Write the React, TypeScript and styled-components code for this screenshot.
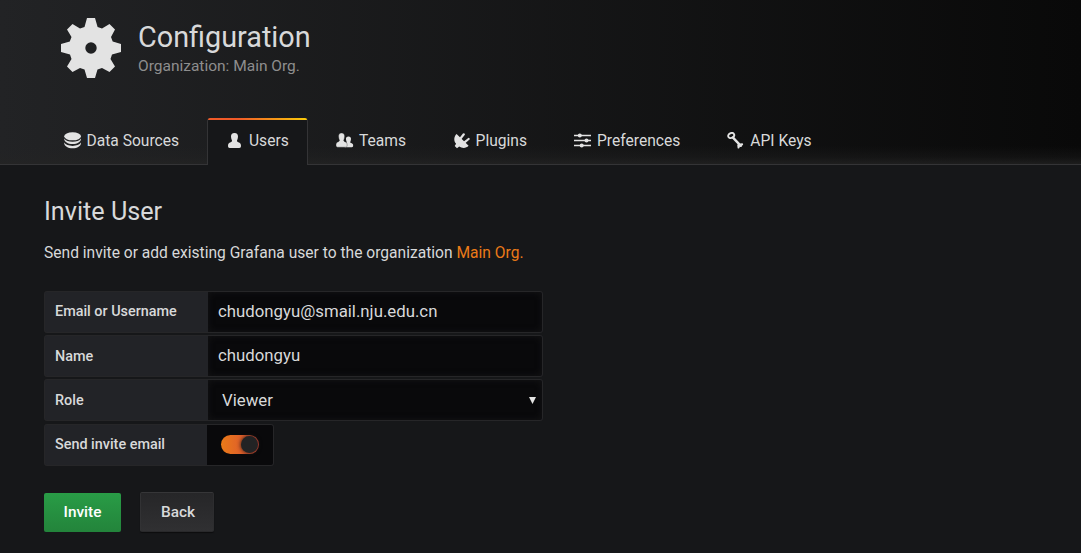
import React from "react";
import styled, { createGlobalStyle, css } from "styled-components";

const GlobalStyle = createGlobalStyle`
  *, *::before, *::after { box-sizing: border-box; }
  html, body { margin: 0; background: #161719; }
  body {
    font-family: Roboto, "Liberation Sans", sans-serif;
    color: #d8d9da;
    font-size: 15.6px;
    overflow: hidden;
  }
`;

const Page = styled.div`
  height: 553px;
  background: #161719;
`;

const Header = styled.header`
  height: 165px;
  padding: 18px 43px 0;
  display: flex;
  flex-direction: column;
  justify-content: space-between;
  background:
    linear-gradient(to top, rgba(36, 36, 36, 0.75), rgba(36, 36, 36, 0.3) 7px, rgba(36, 36, 36, 0) 18px),
    linear-gradient(90deg, #222325, #090909);
  border-bottom: 1px solid #343436;
`;

const Brand = styled.div`
  display: flex;
  padding-left: 18px;
  height: 60px;
`;

const Titles = styled.div`
  padding: 3px 0 0 17px;
`;

const Title = styled.h1`
  margin: 0;
  font-size: 28.8px;
  line-height: 32px;
  font-weight: 400;
`;

const Subtitle = styled.div`
  margin-top: 4px;
  font-size: 15.5px;
  line-height: 18px;
  color: #8e8e8e;
`;

const Tabs = styled.nav`
  display: flex;
  height: 47px;
  margin-bottom: -1px;
`;

const Tab = styled.a<{ $width: number; $active?: boolean }>`
  display: flex;
  align-items: center;
  width: ${(p) => p.$width}px;
  padding: 0 0 3px 20px;
  border: 1px solid transparent;
  border-bottom: 0;
  white-space: nowrap;
  svg { flex: none; }
  ${(p) =>
    p.$active &&
    css`
      position: relative;
      margin-right: 7px;
      background: #161719;
      border-color: #343436;
      border-radius: 3px 3px 0 0;
      &::before {
        content: "";
        position: absolute;
        left: 0;
        right: 0;
        top: -1px;
        height: 2px;
        border-radius: 3px 3px 0 0;
        background: linear-gradient(to right, #f05a28 30%, #fbca0a 99%);
      }
    `}
`;

const TabText = styled.span<{ $gap: number }>`
  margin-left: ${(p) => p.$gap}px;
`;

const Body = styled.main`
  padding: 31px 44px 0;
`;

const Heading = styled.h3`
  margin: 0;
  font-size: 25.2px;
  line-height: 32px;
  font-weight: 400;
`;

const Lead = styled.p`
  margin: 15px 0 28px;
  line-height: 20px;
`;

const OrgName = styled.span`
  color: #eb7b18;
`;

const Form = styled.form`
  display: grid;
  gap: 2.2px;
  width: 499px;
`;

const Row = styled.div`
  display: flex;
  height: 42px;
`;

const Label = styled.label<{ $width?: number; $drop?: number }>`
  width: ${(p) => p.$width ?? 164}px;
  padding: ${(p) => p.$drop ?? 0}px 10px 0;
  line-height: 40px;
  font-size: 14.4px;
  font-weight: 500;
  background: #222327;
  border: 1px solid #262628;
  border-right: 0;
  border-radius: 3px 0 0 3px;
`;

const field = css`
  flex: 1;
  min-width: 0;
  height: 42px;
  margin: 0;
  font: 400 16.8px Roboto, "Liberation Sans", sans-serif;
  color: #d8d9da;
  background: #09090b;
  border: 1px solid #262628;
  border-left: 0;
  border-radius: 0 3px 3px 0;
  box-shadow: inset 0 0 6px #151517;
  outline: 0;
`;

const Input = styled.input`
  ${field}
  padding: 0 10px 2px;
`;

const SelectBox = styled.div`
  ${field}
  display: flex;
  align-items: center;
  justify-content: space-between;
  padding: 0 6px 0 14px;
`;

const SelectText = styled.span`
  padding-bottom: 1px;
`;

const SwitchBox = styled.div`
  width: 67px;
  height: 42px;
  display: flex;
  align-items: center;
  padding: 0 0 1px 14px;
  background: #09090b;
  border: 1px solid #262628;
  border-left: 0;
  border-radius: 0 3px 3px 0;
`;

const Toggle = styled.span`
  display: flex;
  justify-content: flex-end;
  width: 38px;
  height: 19px;
  padding: 1px;
  border-radius: 10px;
  background: linear-gradient(90deg, #eb7b18, #d44939);
`;

const Knob = styled.span`
  width: 17px;
  height: 17px;
  border-radius: 50%;
  background: #222324;
  box-shadow: 0 0 4px #151515;
`;

const Actions = styled.div`
  display: flex;
  align-items: flex-end;
  gap: 19px;
  margin-top: 26.4px;
`;

const Button = styled.button<{ $primary?: boolean }>`
  width: ${(p) => (p.$primary ? 77 : 74)}px;
  height: ${(p) => (p.$primary ? 39 : 40)}px;
  padding: 0 0 0 ${(p) => (p.$primary ? 0 : 2)}px;
  font: 500 15.4px Roboto, "Liberation Sans", sans-serif;
  color: ${(p) => (p.$primary ? "#fff" : "#d8d9da")};
  border: ${(p) => (p.$primary ? "0" : "1px solid")};
  border-color: #363638 #2d2d2f #29292b #323234;
  border-radius: 2px;
  background: ${(p) =>
    p.$primary
      ? "linear-gradient(#299c46, #23843b)"
      : "linear-gradient(#262628, #303032)"};
  box-shadow: ${(p) => (p.$primary ? "none" : "0 1px 1px #0d0d0e")};
`;

const ink = "#e3e3e3";

const GearIcon = () => (
  <svg width="60" height="60" viewBox="0 0 60 60">
    <path
      fill={ink}
      fillRule="evenodd"
      d="M26 0h8l2.600 9 4.400 1.600 7.500-4.600 5.500 5.500-4 7.500 1.700 4.500L60 26v8l-9 2.500-1.500 4.500 4.500 7.500-5.500 5.500-7.500-4-4.500 1.500L34 60h-8l-2.500-8.500-4.500-1.500-7.500 4L6 48.500l4.500-7.500L9 36.500 0 34v-8l8.800-2.500L10.500 19 6 11.500 11.500 6l7.500 4.600 4.500-1.600zM30 24.300a5.700 5.700 0 1 0 0 11.400 5.700 5.700 0 0 0 0-11.400z"
    />
  </svg>
);

const DatabaseIcon = () => (
  <svg width="18" height="17" viewBox="0 0 18 17">
    <ellipse cx="8.600" cy="4.300" rx="8.400" ry="4" fill={ink} />
    <path
      d="M.3 6.400C1.500 8.600 4.800 9.700 8.600 9.700s7.100-1.100 8.300-3.300c.5 3.200-3.300 5.600-8.300 5.600S-.2 9.600.3 6.400zM.3 10.600c1.200 2.200 4.500 3.300 8.300 3.300s7.100-1.100 8.300-3.300c.5 3.200-3.300 5.600-8.300 5.600S-.2 13.800.3 10.600z"
      fill={ink}
    />
  </svg>
);

const personPath =
  "M6.500 0C9 0 10.100 1.400 10 3.700 9.900 5.200 9.500 6.400 9.100 7.300c-.4 1 .1 1.500 1.200 1.900 1.900.7 2.700 1.400 2.700 3.600 0 1.600-.6 2.200-1.700 2.200H1.700C.6 15 0 14.400 0 12.800c0-2.200.8-2.900 2.700-3.600 1.100-.4 1.600-.9 1.200-1.900C3.500 6.400 3.100 5.200 3 3.700 2.900 1.400 4 0 6.500 0z";

const UserIcon = () => (
  <svg width="13" height="15" viewBox="0 0 13 15">
    <path d={personPath} fill={ink} />
  </svg>
);

const TeamIcon = () => (
  <svg width="18" height="15" viewBox="0 0 18 15">
    <path d={personPath} fill={ink} transform="translate(7.800 3.400) scale(.72 .72)" />
    <path d={personPath} fill={ink} stroke="#18191a" strokeWidth=".35" transform="scale(.86 .945)" />
  </svg>
);

const PluginIcon = () => (
  <svg width="16" height="16" viewBox="0 0 16 16">
    <path
      d="M2.600 1L14.600 12.800C12.200 15.500 8 15.500 5.200 13.500L3 15.200.7 13 2.100 10.800C-.5 8-.3 3.600 2.600 1z"
      fill={ink}
    />
    <path d="M6.500 5.500L9.800 1.300M10.500 9.300L14.600 6" stroke={ink} strokeWidth="2.200" strokeLinecap="round" />
  </svg>
);

const SlidersIcon = () => (
  <svg width="17" height="15" viewBox="0 0 17 15">
    <path d="M0 2.500h17M0 7.500h17M0 12.500h17" stroke={ink} strokeWidth="1.500" />
    <circle cx="5.800" cy="2.500" r="2" fill={ink} />
    <circle cx="12.500" cy="7.500" r="2" fill={ink} />
    <circle cx="7.700" cy="12.500" r="2" fill={ink} />
  </svg>
);

const KeyIcon = () => (
  <svg width="17" height="17" viewBox="0 0 17 17">
    <ellipse cx="4.200" cy="3.500" rx="3.100" ry="2.400" fill="none" stroke={ink} strokeWidth="1.900" transform="rotate(-25 4.200 3.500)" />
    <path d="M6 5.600l7.800 8.200" stroke={ink} strokeWidth="2.400" strokeLinecap="round" />
    <path d="M12.600 12.800l2.500-.4M11.300 13.200l.3 2.300M12 14l2-1" stroke={ink} strokeWidth="2.100" strokeLinecap="round" />
  </svg>
);

const CaretIcon = () => (
  <svg width="7" height="7" viewBox="0 0 7 7">
    <path d="M0 0h7L3.500 7z" fill={ink} />
  </svg>
);

const tabs = [
  { text: "Data Sources", icon: <DatabaseIcon />, width: 164, gap: 4.5 },
  { text: "Users", icon: <UserIcon />, width: 101, gap: 8, active: true },
  { text: "Teams", icon: <TeamIcon />, width: 118, gap: 5 },
  { text: "Plugins", icon: <PluginIcon />, width: 120, gap: 5.6 },
  { text: "Preferences", icon: <SlidersIcon />, width: 153, gap: 6 },
  { text: "API Keys", icon: <KeyIcon />, width: 120, gap: 6.3 },
];

export default function App() {
  return (
    <Page>
      <GlobalStyle />
      <Header>
        <Brand>
          <GearIcon />
          <Titles>
            <Title>Configuration</Title>
            <Subtitle>Organization: Main Org.</Subtitle>
          </Titles>
        </Brand>
        <Tabs>
          {tabs.map((t) => (
            <Tab key={t.text} $width={t.width} $active={t.active}>
              {t.icon}
              <TabText $gap={t.gap}>{t.text}</TabText>
            </Tab>
          ))}
        </Tabs>
      </Header>
      <Body>
        <Heading>Invite User</Heading>
        <Lead>
          Send invite or add existing Grafana user to the organization <OrgName>Main Org.</OrgName>
        </Lead>
        <Form onSubmit={(e) => e.preventDefault()}>
          <Row>
            <Label>Email or Username</Label>
            <Input defaultValue="chudongyu@smail.nju.edu.cn" spellCheck={false} />
          </Row>
          <Row>
            <Label $drop={1}>Name</Label>
            <Input defaultValue="chudongyu" spellCheck={false} />
          </Row>
          <Row>
            <Label $drop={1}>Role</Label>
            <SelectBox>
              <SelectText>Viewer</SelectText>
              <CaretIcon />
            </SelectBox>
          </Row>
          <Row>
            <Label $width={163}>Send invite email</Label>
            <SwitchBox>
              <Toggle>
                <Knob />
              </Toggle>
            </SwitchBox>
          </Row>
        </Form>
        <Actions>
          <Button $primary>Invite</Button>
          <Button>Back</Button>
        </Actions>
      </Body>
    </Page>
  );
}
